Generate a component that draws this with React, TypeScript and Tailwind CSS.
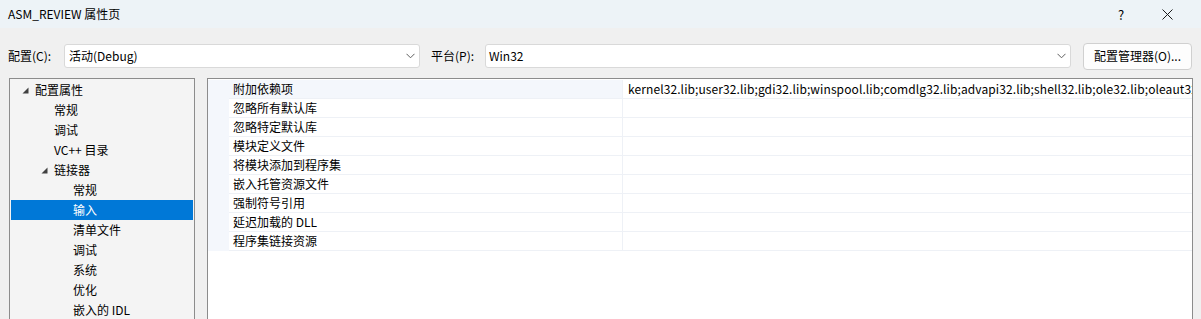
import React from 'react';

const font = { fontFamily: '"Noto Sans CJK SC", "Noto Sans", sans-serif' };

function Chevron() {
  return (
    <svg width="9" height="6" viewBox="0 0 9 6" className="shrink-0">
      <path d="M0.5 0.8 L4.5 4.8 L8.5 0.8" fill="none" stroke="#5f5f5f" strokeWidth="1" />
    </svg>
  );
}

function Tri() {
  return (
    <svg width="7" height="7" viewBox="0 0 7 7" className="shrink-0">
      <path d="M6.5 0.5 L6.5 6.5 L0.5 6.5 Z" fill="#404040" />
    </svg>
  );
}

const tree = [
  { label: '配置属性', level: 0, expand: true },
  { label: '常规', level: 1 },
  { label: '调试', level: 1 },
  { label: 'VC++ 目录', level: 1 },
  { label: '链接器', level: 1, expand: true },
  { label: '常规', level: 2 },
  { label: '输入', level: 2, selected: true },
  { label: '清单文件', level: 2 },
  { label: '调试', level: 2 },
  { label: '系统', level: 2 },
  { label: '优化', level: 2 },
  { label: '嵌入的 IDL', level: 2 },
];

const props = [
  { name: '附加依赖项', value: 'kernel32.lib;user32.lib;gdi32.lib;winspool.lib;comdlg32.lib;advapi32.lib;shell32.lib;ole32.lib;oleaut32.lib;uuid.lib;odbc32.lib;odbccp32.lib;%(AdditionalDependencies)', active: true },
  { name: '忽略所有默认库', value: '' },
  { name: '忽略特定默认库', value: '' },
  { name: '模块定义文件', value: '' },
  { name: '将模块添加到程序集', value: '' },
  { name: '嵌入托管资源文件', value: '' },
  { name: '强制符号引用', value: '' },
  { name: '延迟加载的 DLL', value: '' },
  { name: '程序集链接资源', value: '' },
];

const pad = ['pl-[11px]', 'pl-[30px]', 'pl-[49px]'];

export default function App() {
  return (
    <div className="w-[1201px] h-[319px] overflow-hidden bg-[#f0f0f0] text-[12px] text-black" style={font}>
      {/* Title bar */}
      <div className="h-[28px] bg-[#edf3f7] flex items-center pl-[8px]">
        <span className="flex-1 leading-none">ASM_REVIEW 属性页</span>
        <span className="w-[46px] text-center text-[13px] leading-none">?</span>
        <span className="w-[46px] flex justify-center mr-[-3px]">
          <svg width="11" height="11" viewBox="0 0 11 11">
            <path d="M0.5 0.5 L10.5 10.5 M10.5 0.5 L0.5 10.5" stroke="#1a1a1a" strokeWidth="1" />
          </svg>
        </span>
        <span className="w-[14px]" />
      </div>

      {/* Config row */}
      <div className="flex items-center h-[26px] mt-[15px] pl-[8px]">
        <span className="w-[56px]">配置(C):</span>
        <div className="w-[356px] h-[24px] bg-white border border-[#d9d9d9] rounded-[3px] flex items-center pl-[4px] pr-[4px]">
          <span className="flex-1">活动(Debug)</span>
          <Chevron />
        </div>
        <span className="w-[65px] pl-[11px]">平台(P):</span>
        <div className="w-[586px] h-[24px] bg-white border border-[#d9d9d9] rounded-[3px] flex items-center pl-[3px] pr-[4px]">
          <span className="flex-1">Win32</span>
          <Chevron />
        </div>
        <div className="ml-[12px] w-[109px] h-[27px] bg-[#fdfdfd] border border-[#d0d0d0] rounded-[4px] flex items-center justify-center">
          配置管理器(O)...
        </div>
      </div>

      {/* Panels */}
      <div className="flex mt-[9px] pl-[9px] gap-[12px]">
        <div className="w-[186px] h-[260px] border border-[#8c8c8c] bg-[#f4f4f4] pt-[1px] px-[1px]">
          {tree.map((t, i) => (
            <div
              key={i}
              className={`h-[20px] flex items-center ${t.selected ? 'bg-[#0078d7] text-white' : ''}`}
            >
              <div className={`flex items-center ${pad[t.level]}`}>
                <span className="w-[13px] flex">{t.expand ? <Tri /> : null}</span>
                <span className="leading-none">{t.label}</span>
              </div>
            </div>
          ))}
        </div>
        <div className="w-[986px] h-[260px] border border-[#8c8c8c] bg-white pt-[1px]">
          {props.map((p, i) => (
            <div key={i} className="flex h-[19px] bg-[#f4f7fc]">
              <div className="w-[21px] shrink-0" />
              <div
                className={`w-[394px] shrink-0 border-b border-r border-[#eef1f6] pl-[4px] flex items-center ${p.active ? 'bg-[#f4f7fc]' : 'bg-white'}`}
              >
                <span className="leading-none">{p.name}</span>
              </div>
              <div className="flex-1 min-w-0 bg-white border-b border-[#eef1f6] pl-[5px] flex items-center overflow-hidden whitespace-nowrap">
                <span className="leading-none tracking-[0.1px]">{p.value}</span>
              </div>
            </div>
          ))}
        </div>
      </div>
    </div>
  );
}
